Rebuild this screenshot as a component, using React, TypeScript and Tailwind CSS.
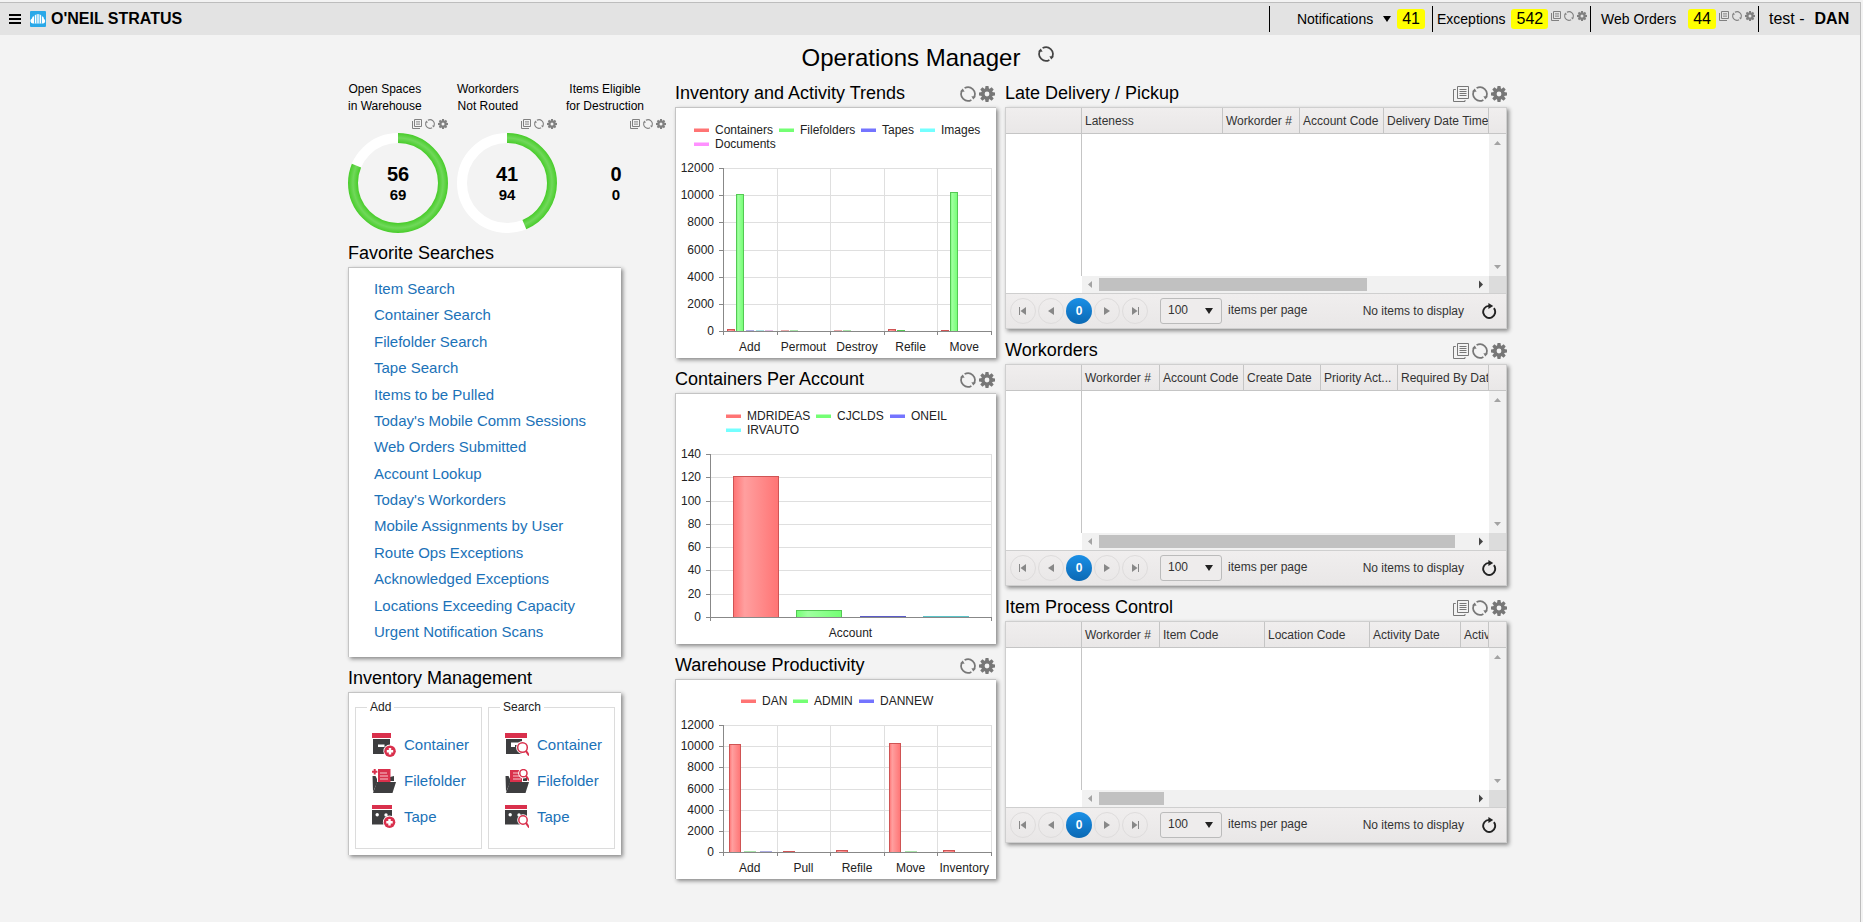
import type { ReactNode } from "react";

type IconProps = { className?: string };

function RefreshIcon({ className = "size-4" }: IconProps) {
  return (
    <svg className={className} viewBox="0 0 16 16" fill="none" stroke="currentColor" strokeWidth="1.7" aria-hidden="true">
      <path d="M4.6 2.1A6.8 6.8 0 0 1 14 11.2" />
      <path d="M11.4 13.9A6.8 6.8 0 0 1 2 4.8" />
      <path d="M0 5.4L2.8 2.4L4.6 5.8Z" fill="currentColor" stroke="none" />
      <path d="M16 10.6L13.2 13.6L11.4 10.2Z" fill="currentColor" stroke="none" />
    </svg>
  );
}

function GearIcon({ className = "size-4" }: IconProps) {
  return (
    <svg className={className} viewBox="0 0 16 16" aria-hidden="true">
      <circle cx="8" cy="8" r="4.1" fill="none" stroke="currentColor" strokeWidth="3.4" />
      {[0, 45, 90, 135, 180, 225, 270, 315].map((deg) => (
        <path key={deg} d="M6.5 0H9.5L10 3.2H6Z" fill="currentColor" transform={`rotate(${deg} 8 8)`} />
      ))}
    </svg>
  );
}

function PagesIcon({ className = "size-4" }: IconProps) {
  return (
    <svg className={className} viewBox="0 0 16 16" fill="none" stroke="currentColor" aria-hidden="true">
      <path d="M4.5 0.5H15.5V12.5H4.5Z" />
      <path d="M6.5 3.5H13.5M6.5 5.5H13.5M6.5 7.5H13.5M6.5 9.5H13.5" />
      <path d="M2.8 3.5H0.5V15.5H12V14" />
    </svg>
  );
}

function SmallPagesIcon() {
  return (
    <svg className="size-2.5" viewBox="0 0 10 10" fill="none" stroke="currentColor" aria-hidden="true">
      <path d="M2.5 0.5H9.5V7.5H2.5Z" />
      <path d="M4 2.9H8M4 5.1H8" />
      <path d="M0.5 2V9.5H8" />
    </svg>
  );
}

function SmallTools() {
  return (
    <div className="flex gap-[3px] text-[#808080]">
      <button aria-label="Open list"><SmallPagesIcon /></button>
      <button aria-label="Refresh"><RefreshIcon className="size-2.5" /></button>
      <button aria-label="Settings"><GearIcon className="size-2.5" /></button>
    </div>
  );
}

function PanelTitle({ title, tools, pages }: { title: string; tools?: boolean; pages?: boolean }) {
  return (
    <div className="flex h-[35px] items-end justify-between">
      <h2 className="text-lg leading-[27px] text-black">{title}</h2>
      {tools && (
        <div className={`flex gap-[3px] pb-[5px] text-[#777] ${pages ? "" : "pr-px"}`}>
          {pages && <button aria-label={`Open ${title}`}><PagesIcon /></button>}
          <button aria-label={`Refresh ${title}`}><RefreshIcon /></button>
          <button aria-label={`${title} settings`}><GearIcon /></button>
        </div>
      )}
    </div>
  );
}

function Card({ className = "", children }: { className?: string; children: ReactNode }) {
  return (
    <div className={`border-l border-t border-[#c4c4c4] bg-white shadow-[2px_2px_4px_#888] ${className}`}>
      {children}
    </div>
  );
}

/* ---------- top bar ---------- */

function Badge({ children }: { children: ReactNode }) {
  return <span className="rounded-[3px] bg-[#ff0] px-[5px] text-base leading-5 text-black">{children}</span>;
}

function TopBar() {
  return (
    <header className="flex h-8 items-center bg-[#e3e3e3] text-sm text-black">
      <button aria-label="Menu" className="ml-[9px]">
        <svg className="h-2.5 w-3" viewBox="0 0 12 10" aria-hidden="true">
          <path d="M0 1H12M0 5H12M0 9H12" stroke="#000" strokeWidth="2" />
        </svg>
      </button>
      <svg className="ml-[9px] size-4" viewBox="0 0 16 16" aria-hidden="true">
        <rect width="16" height="16" rx="1" fill="#29a8e8" />
        <path d="M3 12.6A2.6 2.6 0 0 1 2 7.6A2.6 2.6 0 0 1 4.4 5A4.2 4.2 0 0 1 11.6 5A3 3 0 0 1 14 8A2.5 2.5 0 0 1 13 12.6Z" fill="#fff" />
        <path d="M4.5 5V12.6M6.8 3V12.6M9.2 3V12.6M11.5 5V12.6" stroke="#29a8e8" strokeWidth=".8" />
      </svg>
      <span className="ml-[5px] text-base font-bold">O'NEIL STRATUS</span>

      <div className="ml-auto flex h-[26px]">
        <div className="flex w-[163px] items-center justify-end border-l border-black pr-[7px]">
          <button className="mr-1.5 flex items-center gap-2.5">
            Notifications
            <svg className="h-1.5 w-2" viewBox="0 0 8 6" aria-hidden="true"><path d="M0 0H8L4 6Z" /></svg>
          </button>
          <Badge>41</Badge>
        </div>
        <div className="flex w-[158px] items-center border-l border-black pl-1">
          <span>Exceptions</span>
          <span className="ml-1.5 flex"><Badge>542</Badge></span>
          <div className="mb-1.5 ml-[3px]"><SmallTools /></div>
        </div>
        <div className="flex w-[168px] items-center border-l border-black pl-2.5">
          <span>Web Orders</span>
          <span className="ml-3 flex"><Badge>44</Badge></span>
          <div className="mb-1.5 ml-[3px]"><SmallTools /></div>
        </div>
        <div className="flex w-[102px] items-center gap-2.5 border-l border-black pl-2.5 text-base">
          <span>test -</span>
          <b>DAN</b>
        </div>
      </div>
    </header>
  );
}

/* ---------- gauges ---------- */

function Gauge({ lines, value, total }: { lines: string[]; value: number; total: number }) {
  const length = 2 * Math.PI * 45;
  return (
    <div className="flex w-[100px] flex-col">
      <div className="w-fit whitespace-nowrap text-center text-xs leading-[17px] text-black">
        {lines[0]}
        <br />
        {lines[1]}
      </div>
      <div className="mt-1 flex justify-end"><SmallTools /></div>
      <svg className="mt-1 size-[100px] shrink-0" viewBox="0 0 100 100">
        <defs>
          <radialGradient id="ring" gradientUnits="userSpaceOnUse" cx="50" cy="50" r="50">
            <stop offset=".8" stopColor="#48cc2a" />
            <stop offset=".9" stopColor="#70d85a" />
            <stop offset="1" stopColor="#48cc2a" />
          </radialGradient>
        </defs>
        {total > 0 && (
          <g fill="none" strokeWidth="10">
            <circle cx="50" cy="50" r="45" stroke="#fff" />
            <circle
              cx="50"
              cy="50"
              r="45"
              stroke="url(#ring)"
              strokeDasharray={`${(value / total) * length} ${length}`}
              transform="rotate(-90 50 50)"
            />
          </g>
        )}
        <g textAnchor="middle" fontWeight="bold" fill="#000">
          <text x="50" y="48" fontSize="20">{value}</text>
          <text x="50" y="67" fontSize="15">{total}</text>
        </g>
      </svg>
    </div>
  );
}

/* ---------- left column ---------- */

const searches = [
  "Item Search",
  "Container Search",
  "Filefolder Search",
  "Tape Search",
  "Items to be Pulled",
  "Today's Mobile Comm Sessions",
  "Web Orders Submitted",
  "Account Lookup",
  "Today's Workorders",
  "Mobile Assignments by User",
  "Route Ops Exceptions",
  "Acknowledged Exceptions",
  "Locations Exceeding Capacity",
  "Urgent Notification Scans",
];

function PlusBadge({ x, y }: { x: number; y: number }) {
  return (
    <g>
      <circle cx={x} cy={y} r="6.6" fill="#fff" />
      <circle cx={x} cy={y} r="5.8" fill="#d9304c" />
      <path d={`M${x - 3.2} ${y}H${x + 3.2}M${x} ${y - 3.2}V${y + 3.2}`} stroke="#fff" strokeWidth="2.4" />
    </g>
  );
}

function Lens({ x, y, r }: { x: number; y: number; r: number }) {
  return (
    <g>
      <circle cx={x} cy={y} r={r + 1.6} fill="#fff" />
      <circle cx={x} cy={y} r={r} fill="#fff" stroke="#d9304c" strokeWidth="1.5" />
      <path d={`M${x + r * 0.7} ${y + r * 0.7}l3.2 4.6`} stroke="#d9304c" strokeWidth="2" />
    </g>
  );
}

function ItemIcon({ kind, search }: { kind: string; search: boolean }) {
  return (
    <svg className="size-6 shrink-0" viewBox="0 0 24 24" aria-hidden="true">
      {kind === "Container" && (
        <>
          <path d={search ? "M0 0H22V5H0Z" : "M0 0H19V5H0Z"} fill="#d9304c" />
          <path d={search ? "M1 6H17V21H1Z" : "M1 6H18V21H1Z"} fill="#3d3d3f" />
          <path d={search ? "M6 9.5H14V12H10V14H6Z" : "M6 11.5H12.5V14H6Z"} fill="#fff" />
          {search ? <Lens x={17.5} y={14.5} r={4.8} /> : <PlusBadge x={18} y={18.2} />}
        </>
      )}
      {kind === "Filefolder" && (
        <>
          <path d="M0.5 7H3.5L5 10V14L1 23Z" fill="#3d3d3f" />
          <path d="M18 8L22 7V12H18Z" fill="#3d3d3f" />
          <path d={search ? "M5 1H17V13H5Z" : "M6 0H18.5V13H6Z"} fill="#d9304c" />
          <path d="M8 4H15M8 7H16M8 10H16" stroke="#f7c6cd" strokeWidth="1" />
          <path d="M5 13H24L20.5 24H1Z" fill="#3d3d3f" />
          {search ? <Lens x={18.4} y={4.2} r={3.6} /> : <path d="M0 2.8H5.4M2.7 0V5.6" stroke="#d9304c" strokeWidth="2" />}
        </>
      )}
      {kind === "Tape" && (
        <>
          <path d={search ? "M0 0H22V4H0Z" : "M0 0H20V4H0Z"} fill="#d9304c" />
          <path d={search ? "M0 5H22V19.5H0Z" : "M0 5H20V19.5H0Z"} fill="#3d3d3f" />
          <circle cx="5.2" cy="9.8" r="1.7" fill="#fff" />
          <circle cx="14" cy="10" r="1.7" fill="#fff" />
          {search ? <Lens x={18} y={15} r={4.2} /> : <PlusBadge x={17.5} y={17.2} />}
        </>
      )}
    </svg>
  );
}

function ItemLinks({ legend, search }: { legend: string; search: boolean }) {
  return (
    <fieldset className="min-w-0 flex-1 border border-[#dcdcdc]">
      <legend className="ml-[11px] px-[3px] text-xs leading-[14px] text-[#222]">{legend}</legend>
      <ul className="px-4 pb-[13px] pt-[13px]">
        {["Container", "Filefolder", "Tape"].map((kind) => (
          <li key={kind}>
            <a href="#" className="flex h-9 items-center gap-2 text-[15px] text-[#1b72b8]">
              <ItemIcon kind={kind} search={search} />
              {kind}
            </a>
          </li>
        ))}
      </ul>
    </fieldset>
  );
}

/* ---------- charts ---------- */

const palette: Record<string, { fill: string; light: string; line: string }> = {
  red: { fill: "#ff7474", light: "#ff9f9f", line: "#cf5454" },
  green: { fill: "#74ff74", light: "#a0ffa0", line: "#54c854" },
  blue: { fill: "#7474ff", light: "#a0a0ff", line: "#5a5ac8" },
  cyan: { fill: "#74ffff", light: "#a0ffff", line: "#5ac4c8" },
  pink: { fill: "#ff90ff", light: "#ffb0ff", line: "#c880c8" },
};

type ChartProps = {
  height: number;
  left: number;
  top: number;
  bottom: number;
  max: number;
  step: number;
  categories: string[];
  verticals?: boolean;
  legend: { label: string; color: string; x: number; y: number }[];
  // x is the bar's left edge inside its category
  bars: { category: number; x: number; width: number; value: number; color: string }[];
};

function Chart({ height, left, top, bottom, max, step, categories, verticals = true, legend, bars }: ChartProps) {
  const right = 315;
  const band = (right - left) / categories.length;
  const yOf = (v: number) => Math.round(bottom - (v / max) * (bottom - top));
  const ticks = Array.from({ length: max / step + 1 }, (_, i) => i * step);
  const edges = categories.map((_, i) => Math.round(left + i * band)).concat(right);

  return (
    <svg className="block w-full" viewBox={`0 0 320 ${height}`} fontSize="12" fill="#222">
      <defs>
        {Object.entries(palette).map(([name, c]) => (
          <linearGradient key={name} id={`bar-${name}`}>
            <stop offset="0" stopColor={c.fill} />
            <stop offset=".25" stopColor={c.light} />
            <stop offset="1" stopColor={c.fill} />
          </linearGradient>
        ))}
      </defs>

      {legend.map((item) => (
        <g key={item.label}>
          <rect x={item.x} y={item.y - 5.5} width="15" height="3.5" fill={palette[item.color].fill} />
          <text x={item.x + 21} y={item.y}>{item.label}</text>
        </g>
      ))}

      <g stroke="#dfdfdf" shapeRendering="crispEdges">
        {ticks.slice(1).map((t) => (
          <path key={t} d={`M${left} ${yOf(t) + 0.5}H${right}`} />
        ))}
        {edges.slice(1).map((x, i) =>
          verticals || i === edges.length - 2 ? <path key={x} d={`M${x + 0.5} ${top}V${bottom}`} /> : null
        )}
      </g>

      {bars.map((bar, i) => {
        const y = yOf(bar.value);
        const x = Math.round(left + bar.category * band + bar.x);
        return y >= bottom ? (
          <rect key={i} x={x} y={bottom - 0.5} width={bar.width} height="1" fill={palette[bar.color].line} />
        ) : (
          <rect
            key={i}
            x={x + 0.5}
            y={y + 0.5}
            width={bar.width - 1}
            height={bottom - y}
            fill={`url(#bar-${bar.color})`}
            stroke={palette[bar.color].line}
          />
        );
      })}

      <g stroke="#888" shapeRendering="crispEdges">
        <path d={`M${left + 0.5} ${top}V${bottom}`} />
        {ticks.map((t) => (
          <path key={t} d={`M${left - 4} ${yOf(t) + 0.5}H${left}`} />
        ))}
        <path d={`M${left} ${bottom + 0.5}H${right}`} />
        {edges.map((x) => (
          <path key={x} d={`M${x + 0.5} ${bottom}V${bottom + 4}`} />
        ))}
      </g>

      {ticks.map((t) => (
        <text key={t} x={left - 9} y={yOf(t) + 4} textAnchor="end">{t}</text>
      ))}
      {categories.map((name, i) => (
        <text key={name} x={left + (i + 0.5) * band} y={bottom + 20} textAnchor="middle">{name}</text>
      ))}
    </svg>
  );
}

/* ---------- grids ---------- */

type Column = { label: string; width: string };

function Arrow({ d, color }: { d: string; color: string }) {
  return (
    <svg className="size-[17px] shrink-0" viewBox="0 0 17 17" fill={color} aria-hidden="true">
      <path d={d} />
    </svg>
  );
}

function PagerButton({ label, d }: { label: string; d: string }) {
  return (
    <button aria-label={label} className="flex size-[26px] items-center justify-center rounded-full border border-[#dedcdc]">
      <svg className="size-3" viewBox="0 0 12 12" fill="#888" aria-hidden="true"><path d={d} /></svg>
    </button>
  );
}

function DataGrid({ id, columns, thumb }: { id: string; columns: Column[]; thumb: string }) {
  return (
    <div className="border border-[#cfcfcf] bg-white text-xs text-[#333] shadow-[2px_2px_4px_#888]">
      <table className="w-full table-fixed border-separate border-spacing-0">
        <thead>
          <tr className="h-[26px] bg-linear-to-b from-[#f0eeee] to-[#e9e7e7]">
            <th className="w-[76px] border-b border-r border-[#c5c5c5] p-0" />
            {columns.map((col) => (
              <th
                key={col.label}
                className={`overflow-hidden whitespace-nowrap border-b border-r border-[#c5c5c5] p-0 pl-[3px] text-left font-normal ${col.width}`}
              >
                {col.label}
              </th>
            ))}
            <th className="w-[17px] border-b border-[#c5c5c5] p-0" />
          </tr>
        </thead>
        <tbody>
          <tr className="h-[142px]">
            <td className="border-r border-[#c5c5c5] p-0" />
            <td colSpan={columns.length} className="p-0" />
            <td className="bg-[#f1f1f1] p-0">
              <div className="flex h-[142px] flex-col justify-between">
                <Arrow d="M5 11L8.5 7L12 11Z" color="#a3a3a3" />
                <Arrow d="M5 6L8.5 10L12 6Z" color="#a3a3a3" />
              </div>
            </td>
          </tr>
          <tr className="h-[17px]">
            <td className="p-0" />
            <td colSpan={columns.length} className="bg-[#f1f1f1] p-0">
              <div className="flex items-center">
                <Arrow d="M10 5L6 8.5L10 12Z" color="#a3a3a3" />
                <div className="flex-1">
                  <div className={`h-[13px] bg-[#c1c1c1] ${thumb}`} />
                </div>
                <Arrow d="M7 4.5L11 8.5L7 12.5Z" color="#444" />
              </div>
            </td>
            <td className="bg-[#dcdcdc] p-0" />
          </tr>
        </tbody>
      </table>
      <div className="flex h-[35px] items-center border-t border-[#cfcfcf] bg-linear-to-b from-[#f0eeee] to-[#e9e7e7] pl-1">
        <div className="flex gap-0.5">
          <PagerButton label="First page" d="M2 2H3V10H2ZM9 2V10L3.5 6Z" />
          <PagerButton label="Previous page" d="M9 2V10L3 6Z" />
          <button className="size-[26px] rounded-full bg-linear-to-b from-[#1a8fe6] to-[#0b69b4] font-bold text-white">0</button>
          <PagerButton label="Next page" d="M3 2V10L9 6Z" />
          <PagerButton label="Last page" d="M3 2V10L8.5 6ZM9 2H10V10H9Z" />
        </div>
        <div className="relative ml-3 flex">
          <select
            id={id}
            defaultValue="100"
            className="h-[26px] w-[62px] appearance-none rounded-[3px] border border-[#bbb] bg-[#eeecec] pl-[7px] pb-0.5 text-xs"
          >
            <option>100</option>
          </select>
          <svg className="pointer-events-none absolute right-[9px] top-2.5 h-1.5 w-2" viewBox="0 0 8 6" fill="#222" aria-hidden="true">
            <path d="M0 0H8L4 6Z" />
          </svg>
        </div>
        <label htmlFor={id} className="ml-1.5 pb-0.5">items per page</label>
        <span className="ml-auto">No items to display</span>
        <button aria-label="Reload" className="ml-[17px] mr-[9px]">
          <svg className="size-4" viewBox="0 0 16 16" aria-hidden="true">
            <path d="M12.9 5.2A6 6 0 1 1 8 2.9" fill="none" stroke="#222" strokeWidth="1.9" />
            <path d="M7.4 0L12.2 2.9L7.4 6Z" fill="#222" />
          </svg>
        </button>
      </div>
    </div>
  );
}

export default function App() {
  return (
    <div className="min-h-screen bg-[#f3f3f3] pr-0.5 pt-0.5 font-['Liberation_Sans',Arial,sans-serif]">
      <div className="min-h-[calc(100vh-2px)] border-r border-t border-[#bdbdbd]">
        <TopBar />

        <div className="flex h-[37px] items-start justify-center gap-[18px] pr-1">
          <h1 className="pt-[9px] text-2xl leading-7 text-black">Operations Manager</h1>
          <button aria-label="Refresh all" className="mt-[11px] text-[#444]"><RefreshIcon /></button>
        </div>

        <main className="mx-auto grid max-w-[1164px] grid-cols-1 gap-[9px] pr-[5px] xl:grid-cols-[318px_321px_minmax(0,1fr)]">
          <div>
            <div className="flex h-40 gap-[9px] pt-[9px]">
              <Gauge lines={["Open Spaces", "in Warehouse"]} value={56} total={69} />
              <Gauge lines={["Workorders", "Not Routed"]} value={41} total={94} />
              <Gauge lines={["Items Eligible", "for Destruction"]} value={0} total={0} />
            </div>

            <PanelTitle title="Favorite Searches" />
            <Card className="max-w-[273px]">
              <ul className="flex min-h-[389px] flex-col justify-between pb-[15px] pl-[25px] pt-[11px] text-[15px] leading-5 text-[#1b72b8]">
                {searches.map((name) => (
                  <li key={name}><a href="#">{name}</a></li>
                ))}
              </ul>
            </Card>

            <PanelTitle title="Inventory Management" />
            <Card className="flex max-w-[273px] gap-1.5 px-1.5 pb-1.5 pt-[7px]">
              <ItemLinks legend="Add" search={false} />
              <ItemLinks legend="Search" search />
            </Card>
          </div>

          <div>
            <PanelTitle title="Inventory and Activity Trends" tools />
            <Card>
              <Chart
                height={250}
                left={47}
                top={60}
                bottom={223}
                max={12000}
                step={2000}
                categories={["Add", "Permout", "Destroy", "Refile", "Move"]}
                legend={[
                  { label: "Containers", color: "red", x: 18, y: 26 },
                  { label: "Filefolders", color: "green", x: 103, y: 26 },
                  { label: "Tapes", color: "blue", x: 185, y: 26 },
                  { label: "Images", color: "cyan", x: 244, y: 26 },
                  { label: "Documents", color: "pink", x: 18, y: 40 },
                ]}
                bars={[
                  { category: 0, x: 4, width: 8, value: 150, color: "red" },
                  { category: 0, x: 13, width: 8, value: 10100, color: "green" },
                  { category: 0, x: 23, width: 8, value: 5, color: "blue" },
                  { category: 0, x: 33, width: 8, value: 5, color: "cyan" },
                  { category: 0, x: 42, width: 8, value: 5, color: "pink" },
                  { category: 1, x: 4, width: 8, value: 5, color: "red" },
                  { category: 1, x: 13, width: 8, value: 5, color: "green" },
                  { category: 2, x: 4, width: 8, value: 5, color: "red" },
                  { category: 2, x: 13, width: 8, value: 5, color: "green" },
                  { category: 3, x: 4, width: 8, value: 150, color: "red" },
                  { category: 3, x: 13, width: 8, value: 60, color: "green" },
                  { category: 4, x: 4, width: 8, value: 60, color: "red" },
                  { category: 4, x: 13, width: 8, value: 10250, color: "green" },
                ]}
              />
            </Card>

            <PanelTitle title="Containers Per Account" tools />
            <Card>
              <Chart
                height={250}
                left={34}
                top={60}
                bottom={223}
                max={140}
                step={20}
                categories={["Account"]}
                legend={[
                  { label: "MDRIDEAS", color: "red", x: 50, y: 26 },
                  { label: "CJCLDS", color: "green", x: 140, y: 26 },
                  { label: "ONEIL", color: "blue", x: 214, y: 26 },
                  { label: "IRVAUTO", color: "cyan", x: 50, y: 40 },
                ]}
                bars={[
                  { category: 0, x: 23, width: 46, value: 121, color: "red" },
                  { category: 0, x: 86, width: 46, value: 6, color: "green" },
                  { category: 0, x: 150, width: 46, value: 1, color: "blue" },
                  { category: 0, x: 213, width: 46, value: 1, color: "cyan" },
                ]}
              />
            </Card>

            <PanelTitle title="Warehouse Productivity" tools />
            <Card>
              <Chart
                height={199}
                left={47}
                top={45}
                bottom={172}
                max={12000}
                step={2000}
                categories={["Add", "Pull", "Refile", "Move", "Inventory"]}
                legend={[
                  { label: "DAN", color: "red", x: 65, y: 25 },
                  { label: "ADMIN", color: "green", x: 117, y: 25 },
                  { label: "DANNEW", color: "blue", x: 183, y: 25 },
                ]}
                bars={[
                  { category: 0, x: 6, width: 12, value: 10200, color: "red" },
                  { category: 0, x: 21, width: 12, value: 5, color: "green" },
                  { category: 0, x: 37, width: 12, value: 5, color: "blue" },
                  { category: 1, x: 6, width: 12, value: 80, color: "red" },
                  { category: 2, x: 6, width: 12, value: 200, color: "red" },
                  { category: 3, x: 5, width: 12, value: 10300, color: "red" },
                  { category: 3, x: 21, width: 12, value: 5, color: "green" },
                  { category: 4, x: 6, width: 12, value: 200, color: "red" },
                ]}
              />
            </Card>
          </div>

          <div>
            <PanelTitle title="Late Delivery / Pickup" tools pages />
            <DataGrid
              id="late-page-size"
              thumb="w-[268px]"
              columns={[
                { label: "Lateness", width: "w-[141px]" },
                { label: "Workorder #", width: "w-[77px]" },
                { label: "Account Code", width: "w-[84px]" },
                { label: "Delivery Date Time", width: "w-[105px]" },
              ]}
            />
            <PanelTitle title="Workorders" tools pages />
            <DataGrid
              id="workorders-page-size"
              thumb="w-[356px]"
              columns={[
                { label: "Workorder #", width: "w-[78px]" },
                { label: "Account Code", width: "w-[84px]" },
                { label: "Create Date", width: "w-[77px]" },
                { label: "Priority Act...", width: "w-[77px]" },
                { label: "Required By Dat", width: "w-[91px]" },
              ]}
            />
            <PanelTitle title="Item Process Control" tools pages />
            <DataGrid
              id="items-page-size"
              thumb="w-[65px]"
              columns={[
                { label: "Workorder #", width: "w-[78px]" },
                { label: "Item Code", width: "w-[105px]" },
                { label: "Location Code", width: "w-[105px]" },
                { label: "Activity Date", width: "w-[91px]" },
                { label: "Activ", width: "w-[28px]" },
              ]}
            />
          </div>
        </main>
      </div>
    </div>
  );
}
